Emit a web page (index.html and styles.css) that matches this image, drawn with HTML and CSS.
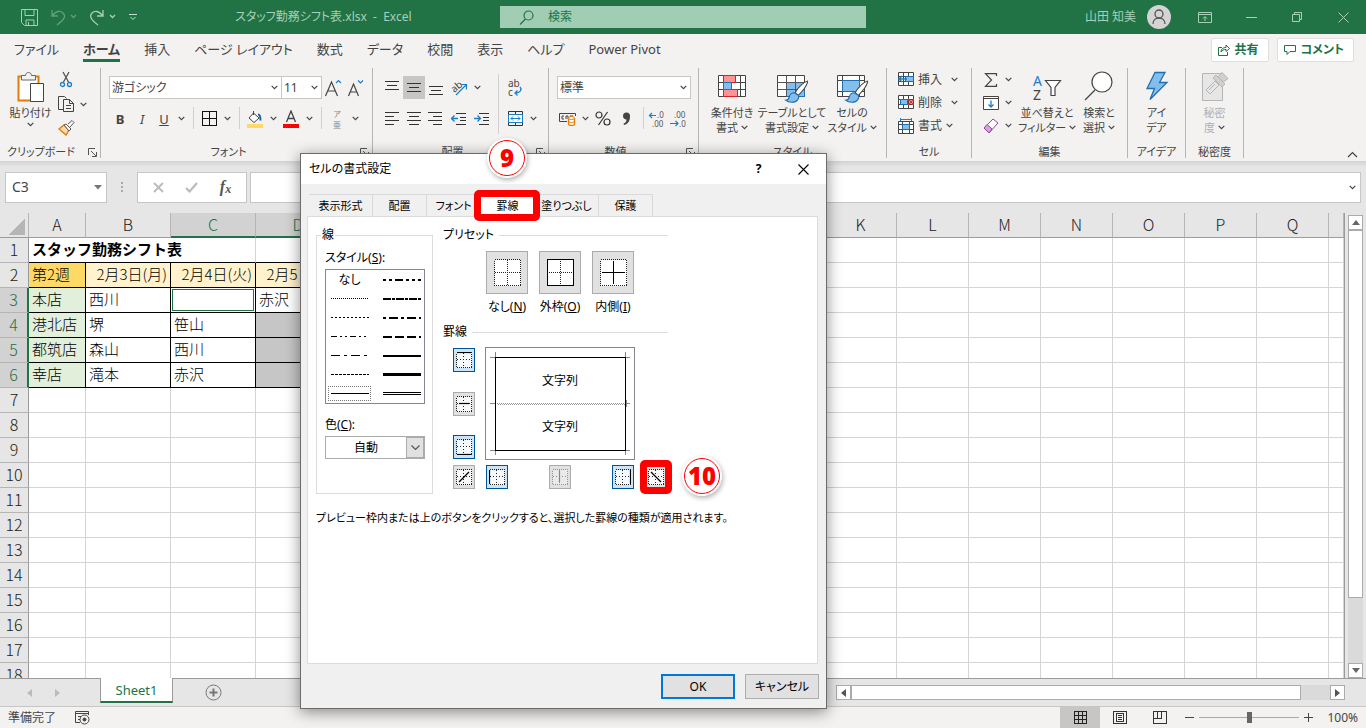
FILE: index.html
```html
<!DOCTYPE html>
<html lang="ja">
  <head>
    <meta charset="UTF-8" />
    <meta name="viewport" content="width=device-width, initial-scale=1.0" />
    <title>スタッフ勤務シフト表.xlsx - Excel</title>
    <link rel="stylesheet" href="styles.css">
  </head>
  <body>
    <!-- shared icons -->
    <svg class="defs" width="0" height="0">
      <symbol id="chev" viewBox="0 0 7 5"><path d="M.7.8l2.800 2.800L6.300.8" fill="none" stroke="#444" stroke-width="1.200" /></symbol>
      <symbol id="launcher" viewBox="0 0 9 9"><path d="M.5 7V.5H7M3 3l5 5M8.500 4v4.500H4" fill="none" stroke="#555" /></symbol>
      <symbol id="brush" viewBox="0 0 30 30">
        <path d="M29 7.500c-4 1-9 6-12 11l3 2.500c4-4 8-9 9-13.500z" fill="#fff" stroke="#444" />
        <path d="M16 18.500c-2 0-4 1.500-4.500 4-.5 2-1.500 3-3.500 3 3 2.500 9 3 11.500-.5 1-1.500 1-3 .5-4z" fill="#83beec" stroke="#1f6fb5" />
      </symbol>
    </svg>

    <header class="titlebar">
      <div class="titlebar-left">
        <button class="qat" aria-label="保存">
          <svg width="17" height="17" fill="none" stroke="#a6d0b7"><path d="M.5.5h16v16h-13l-3-3zM4 .5v6h9v-6M5 16v-5h8v5M7.500 16v-3" /></svg>
        </button>
        <button class="qat off" aria-label="元に戻す">
          <svg width="26" height="17" fill="none" stroke="#5f9f7c" stroke-width="1.300"><path d="M1 1v6h6M1 7c4-5 8-6 11-3s2 6-6 12M20 6l2.500 2.500L25 6" /></svg>
        </button>
        <button class="qat" aria-label="やり直し">
          <svg width="26" height="17" fill="none" stroke="#a6d0b7" stroke-width="1.300"><path d="M13 1v6H7M13 7C9 2 5 1 2 4s-1 7 6 12M20 6l2.500 2.500L25 6" /></svg>
        </button>
        <button class="qat" aria-label="カスタマイズ">
          <svg width="8" height="7" fill="none" stroke="#c4dfcf"><path d="M0 .5h8M1.500 3L4 5.500 6.500 3" /></svg>
        </button>
        <span class="doc-name">スタッフ勤務シフト表.xlsx&nbsp; -&nbsp; Excel</span>
      </div>
      <label class="search">
        <svg width="15" height="15" fill="none" stroke="#217346" stroke-width="1.200"><circle cx="9.500" cy="5.500" r="4.500" /><path d="M6.500 9L1 14.500" /></svg>
        <input type="text" placeholder="検索" />
      </label>
      <div class="titlebar-right">
        <span class="user">山田 知美</span>
        <svg class="avatar" width="24" height="24" fill="none" stroke="#555" stroke-width="1.300"><circle cx="12" cy="12" r="12" fill="#d4d4d4" stroke="none" /><circle cx="12" cy="9" r="4" /><path d="M6 19c0-8 12-8 12 0" /></svg>
        <button class="win" aria-label="リボンの表示"><svg width="14" height="11" fill="none" stroke="#a6d0b7"><path d="M.5.5h13v10H.5zM.5 2.500h13M7 9V5M5 6.500l2-2 2 2" /></svg></button>
        <button class="win" aria-label="最小化"><svg width="11" height="11" stroke="#a6d0b7"><path d="M0 5.500h11" /></svg></button>
        <button class="win" aria-label="元のサイズ"><svg width="11" height="11" fill="none" stroke="#a6d0b7"><path d="M.5 2.500h7v7h-7zM2.500 2V.5h7v7H8" /></svg></button>
        <button class="win" aria-label="閉じる"><svg width="11" height="11" stroke="#a6d0b7"><path d="M.5.5l10 10M10.500.5l-10 10" /></svg></button>
      </div>
    </header>

    <nav class="tabs">
      <a href="#">ファイル</a>
      <a href="#" class="current">ホーム</a>
      <a href="#">挿入</a>
      <a href="#">ページ レイアウト</a>
      <a href="#">数式</a>
      <a href="#">データ</a>
      <a href="#">校閲</a>
      <a href="#">表示</a>
      <a href="#">ヘルプ</a>
      <a href="#">Power Pivot</a>
      <div class="tab-actions">
        <button><svg width="12" height="12" fill="none" stroke="#217346"><path d="M4 3.500H.5v8h9V8M3 8c0-3 2-4.500 5-4.500V1l3.500 3.500L8 7.500V5.500C6 5.500 4 6 3 8z" /></svg>共有</button>
        <button><svg width="12" height="12" fill="none" stroke="#217346"><path d="M.5 1.500h11v6H6l-3 3v-3H.500z" /></svg>コメント</button>
      </div>
    </nav>

    <section class="ribbon">
      <div class="group clipboard">
        <div class="group-body">
          <button class="big">
            <svg width="30" height="32" fill="none"><path d="M2.500 5.500h20v24h-20z" fill="#fff" stroke="#e07c0a" stroke-width="2" /><path d="M5.500 9V4.500h4c0-4 6-4 6 0h4V9z" fill="#f3f2f1" stroke="#666" /><path d="M14.500 12.500h13v18h-13z" fill="#fff" stroke="#444" /></svg>
            <span>貼り付け</span>
            <svg class="chev"><use href="#chev" /></svg>
          </button>
          <div class="stack">
            <button aria-label="切り取り"><svg width="16" height="18" fill="none"><path d="M5 1l5.500 10M11 1L5.500 11" stroke="#555" stroke-width="1.300" /><circle cx="4.500" cy="13.500" r="2" stroke="#1b7fc7" stroke-width="1.300" /><circle cx="11.500" cy="13.500" r="2" stroke="#1b7fc7" stroke-width="1.300" /></svg></button>
            <button aria-label="コピー"><svg width="17" height="17" fill="#f3f2f1" stroke="#444"><path d="M6 13.500H.5V.5h6l2 2" /><path d="M5.500 3.500h6l4 4v8h-10zM11.500 3.500v4h4M8 9.500h5M8 12.500h5" /></svg><svg class="chev"><use href="#chev" /></svg></button>
            <button aria-label="書式のコピー"><svg width="17" height="16" fill="none"><path d="M1 9l5-4 5 5-3 5z" fill="#fdd9a8" stroke="#e07c0a" stroke-width="1.400" /><path d="M6 5l2-1 5 5-2 2zM10 4l4-3.500 2 2L12 7" fill="#fff" stroke="#555" /></svg></button>
          </div>
        </div>
        <div class="group-label">クリップボード<svg class="launch"><use href="#launcher" /></svg></div>
      </div>

      <div class="group font">
        <div class="group-body rows">
          <div class="row">
            <span class="combo font-name"><select aria-label="フォント"><option>游ゴシック</option></select><svg class="chev"><use href="#chev" /></svg></span>
            <span class="combo font-size"><select aria-label="フォント サイズ"><option>11</option></select><svg class="chev"><use href="#chev" /></svg></span>
            <button class="tool" aria-label="拡大"><svg width="18" height="20" fill="none"><path d="M1.500 18L7.500 4l6 14M4 13h7" stroke="#444" stroke-width="1.200" /><path d="M12 5l2.500-2.500L17 5" stroke="#1b7fc7" stroke-width="1.200" /></svg></button>
            <button class="tool" aria-label="縮小"><svg width="18" height="20" fill="none"><path d="M2.500 18L7.500 6l5 12M4.500 14h6" stroke="#444" stroke-width="1.200" /><path d="M12 2.500L14.500 5 17 2.500" stroke="#1b7fc7" stroke-width="1.200" /></svg></button>
          </div>
          <div class="row">
            <button class="tool"><b>B</b></button>
            <button class="tool"><i>I</i></button>
            <button class="tool"><u>U</u></button>
            <button class="drop" aria-label="下線"><svg class="chev"><use href="#chev" /></svg></button>
            <span class="sep"></span>
            <button class="tool wide" aria-label="罫線"><svg width="15" height="15" fill="none" stroke="#111" class="crisp"><path d="M.5.5h14v14H.5zM7.500 0v15M0 7.500h15" /></svg></button>
            <button class="drop" aria-label="罫線の種類"><svg class="chev"><use href="#chev" /></svg></button>
            <span class="sep"></span>
            <button class="tool wide" aria-label="塗りつぶし"><svg width="16" height="18" fill="none"><path d="M6.500 3l5.500 5-5 4.500L2 8zM6.500 5V1" fill="#fff" stroke="#444" /><path d="M11 4.500c2 0 2.500 2 2.500 6" stroke="#1b5fa5" stroke-width="2" /><path d="M0 14h16v4H0z" fill="#ffd966" /></svg></button>
            <button class="drop" aria-label="塗りつぶしの色"><svg class="chev"><use href="#chev" /></svg></button>
            <button class="tool wide" aria-label="フォントの色"><svg width="16" height="18" fill="none"><path d="M3.500 12L8 1l4.500 11M5 8.500h6" stroke="#444" stroke-width="1.300" /><path d="M0 14h16v4H0z" fill="#f00" /></svg></button>
            <button class="drop" aria-label="文字の色"><svg class="chev"><use href="#chev" /></svg></button>
            <span class="sep"></span>
            <button class="tool wide ruby"><span>ア</span><span>亜</span></button>
            <button class="drop" aria-label="ふりがな"><svg class="chev"><use href="#chev" /></svg></button>
          </div>
        </div>
        <div class="group-label">フォント<svg class="launch"><use href="#launcher" /></svg></div>
      </div>

      <div class="group align">
        <div class="group-body">
          <div class="rows">
            <div class="row">
              <button class="tool" aria-label="上揃え"><svg width="14" height="16" stroke="#333" class="crisp"><path d="M0 1.500h14M2 5.500h10M0 9.500h14" /></svg></button>
              <button class="tool on" aria-label="上下中央揃え"><svg width="14" height="16" stroke="#333" class="crisp"><path d="M0 3.500h14M2 7.500h10M0 11.500h14" /></svg></button>
              <button class="tool" aria-label="下揃え"><svg width="14" height="16" stroke="#333" class="crisp"><path d="M0 6.500h14M2 10.500h10M0 14.500h14" /></svg></button>
              <button class="tool wide" aria-label="方向"><svg width="20" height="19" fill="none"><text x="3" y="13" font-size="10" fill="#444" transform="rotate(-40 7 11)">ab</text><path d="M7 17L17 7M12.500 6.500h5v5" stroke="#1b7fc7" stroke-width="1.200" /></svg></button>
              <button class="drop" aria-label="方向の種類"><svg class="chev"><use href="#chev" /></svg></button>
            </div>
            <div class="row">
              <button class="tool" aria-label="左揃え"><svg width="14" height="14" stroke="#333" class="crisp"><path d="M0 .5h14M0 4.500h9M0 8.500h14M0 12.500h9" /></svg></button>
              <button class="tool" aria-label="中央揃え"><svg width="14" height="14" stroke="#333" class="crisp"><path d="M0 .5h14M2 4.500h10M0 8.500h14M2 12.500h10" /></svg></button>
              <button class="tool" aria-label="右揃え"><svg width="14" height="14" stroke="#333" class="crisp"><path d="M0 .5h14M5 4.500h9M0 8.500h14M5 12.500h9" /></svg></button>
              <button class="tool wide" aria-label="インデントを減らす"><svg width="15" height="13" fill="none" stroke="#333"><path d="M5 1.500h10M9 5.500h6M9 8.500h6M5 12.500h10" /><path d="M0 6.500h7M3.500 3.500l-3 3 3 3" stroke="#1b7fc7" stroke-width="1.300" /></svg></button>
              <button class="tool" aria-label="インデントを増やす"><svg width="15" height="13" fill="none" stroke="#333"><path d="M5 1.500h10M9 5.500h6M9 8.500h6M5 12.500h10" /><path d="M0 6.500h6M3.500 3.500l3 3-3 3" stroke="#1b7fc7" stroke-width="1.300" /></svg></button>
            </div>
          </div>
          <span class="sep tall"></span>
          <div class="rows">
            <div class="row">
              <button class="tool wide" aria-label="折り返して全体を表示する"><svg width="18" height="20"><text x="2" y="9" font-size="10" fill="#444">ab</text><text x="2" y="18" font-size="10" fill="#444">c</text><path d="M14 9c2 2 1 6-5 6M11.500 12.500L9 15l2.500 2.500" fill="none" stroke="#1b7fc7" stroke-width="1.300" /></svg></button>
            </div>
            <div class="row">
              <button class="tool wide" aria-label="セルを結合"><svg width="15" height="15" fill="none"><path d="M.5.5h14v14H.5zM7.500 0v4M7.500 11v4" stroke="#333" /><path d="M.5 3.500h14v8H.5z" fill="#fff" stroke="#1b7fc7" /><path d="M3 7.500h9M5 5.500l-2 2 2 2M10 5.500l2 2-2 2" stroke="#1b7fc7" /></svg></button>
              <button class="drop" aria-label="結合の種類"><svg class="chev"><use href="#chev" /></svg></button>
            </div>
          </div>
        </div>
        <div class="group-label">配置<svg class="launch"><use href="#launcher" /></svg></div>
      </div>

      <div class="group number">
        <div class="group-body rows">
          <div class="row">
            <span class="combo format"><select aria-label="表示形式"><option>標準</option></select><svg class="chev"><use href="#chev" /></svg></span>
          </div>
          <div class="row">
            <button class="tool" aria-label="通貨"><svg width="18" height="14" fill="none"><path d="M16.500 4V1.500H.5v8H8M5 4H3v3h2M7 7V4h2v3M11 4h3" stroke="#444" /><path d="M9.500 6v6c0 2 6 2 6 0V6" fill="#fff" stroke="#e07c0a" stroke-width="1.300" /><ellipse cx="12.500" cy="6" rx="3" ry="1.500" stroke="#e07c0a" fill="#fff" /><path d="M9.500 9c0 2 6 2 6 0" stroke="#e07c0a" /></svg></button>
            <button class="drop" aria-label="通貨の種類"><svg class="chev"><use href="#chev" /></svg></button>
            <button class="tool wide" aria-label="パーセント"><svg width="16" height="15" fill="none" stroke="#333" stroke-width="1.200"><circle cx="4" cy="4" r="3" /><circle cx="12" cy="11" r="3" /><path d="M12.500 1l-9 13" /></svg></button>
            <button class="tool" aria-label="桁区切り"><svg width="9" height="14"><path d="M1 4a3.500 3.500 0 0 1 7 0c0 5-2 8-6 9l-.5-1.500c2-.5 3-2 3-4C2.500 7.500 1 6 1 4z" fill="#444" /></svg></button>
            <span class="sep"></span>
            <button class="tool" aria-label="小数点以下を増やす"><svg width="20" height="18" fill="none"><text x="9" y="8" font-size="8" fill="#555">.0</text><text x="4" y="17" font-size="8" fill="#555">.00</text><path d="M1 5.500h7M4 3L1.500 5.500 4 8" stroke="#1b7fc7" stroke-width="1.200" /></svg></button>
            <button class="tool" aria-label="小数点以下を減らす"><svg width="20" height="18" fill="none"><text x="4" y="8" font-size="8" fill="#555">.00</text><text x="9" y="17" font-size="8" fill="#555">.0</text><path d="M0 13.500h8M5.500 11L8 13.500 5.500 16" stroke="#1b7fc7" stroke-width="1.200" /></svg></button>
          </div>
        </div>
        <div class="group-label">数値<svg class="launch"><use href="#launcher" /></svg></div>
      </div>

      <div class="group styles">
        <div class="group-body">
          <button class="big">
            <svg width="30" height="32" fill="none"><path d="M1.500 4.500h27v21h-27zM1 11.500h28M1 18.500h28M6.500 4v22M13.500 4v22M23.500 4v22" fill="#fff" stroke="#444" /><path d="M6.500 4.500h12v7h-12zM6.500 18.500h14v7h-14z" fill="#ff9393" stroke="#d92020" /><path d="M6.500 11.500h8v7h-8z" fill="#83beec" stroke="#1f6fb5" /></svg>
            <span>条件付き<br>書式 <svg class="chev"><use href="#chev" /></svg></span>
          </button>
          <button class="big">
            <svg width="32" height="32" fill="none"><path d="M1.500 4.500h27v21h-27z" fill="#fff" stroke="#444" /><path d="M10.500 11.500h18v14h-18z" fill="#83beec" stroke="#1f6fb5" /><path d="M1 11.500h28M1 18.500h28M10.500 4v22M19.500 4v22" stroke="#555" /><use href="#brush" width="32" height="32" x="1" y="2" /></svg>
            <span>テーブルとして<br>書式設定 <svg class="chev"><use href="#chev" /></svg></span>
          </button>
          <button class="big">
            <svg width="32" height="32" fill="none"><path d="M1.500 4.500h27v21h-27zM1 9.500h28M1 20.500h28M6.500 4v22M23.500 4v22" fill="#fff" stroke="#444" /><path d="M6.500 9.500h17v11h-17z" fill="#83beec" stroke="#1f6fb5" /><use href="#brush" width="32" height="32" x="1" y="2" /></svg>
            <span>セルの<br>スタイル <svg class="chev"><use href="#chev" /></svg></span>
          </button>
        </div>
        <div class="group-label">スタイル</div>
      </div>

      <div class="group cells">
        <div class="group-body list">
          <button><svg width="16" height="15" fill="none"><path d="M.5.5h15v13H.5zM5.500 0v14M10.500 0v14M0 4.500h16M0 9.500h16" fill="#fff" stroke="#444" /><path d="M7.500 4.500h8v5h-8z" fill="#83beec" stroke="#1f6fb5" /><path d="M1 7h8M4 4L1 7l3 3" stroke="#1b7fc7" stroke-width="1.500" /></svg>挿入<svg class="chev far"><use href="#chev" /></svg></button>
          <button><svg width="16" height="15" fill="none"><path d="M.5.5h15v13H.5zM5.500 0v14M10.500 0v14M0 4.500h16M0 9.500h16" fill="#fff" stroke="#444" /><path d="M2.500 4.500h7v5h-7z" fill="#83beec" stroke="#1f6fb5" /><path d="M10 4l6 6M16 4l-6 6" stroke="#e03030" stroke-width="1.500" /></svg>削除<svg class="chev far"><use href="#chev" /></svg></button>
          <button><svg width="16" height="16" fill="none"><path d="M.5 3.500h15v12H.5zM4.500 3v12M11.500 3v12M0 6.500h16M0 11.500h16" fill="#fff" stroke="#444" /><path d="M4.500 6.500h7v5h-7z" fill="#83beec" stroke="#1f6fb5" /><path d="M2 1.500h12M2.500 0v3M13.500 0v3" stroke="#1b7fc7" /></svg>書式<svg class="chev"><use href="#chev" /></svg></button>
        </div>
        <div class="group-label">セル</div>
      </div>

      <div class="group editing">
        <div class="group-body">
          <div class="list">
            <button aria-label="オート SUM"><svg width="16" height="14" fill="none" stroke="#444" stroke-width="1.200"><path d="M13.500 3V.6H2.500l6 6.400-6 6.400h11V11" /></svg><svg class="chev"><use href="#chev" /></svg></button>
            <button aria-label="フィル"><svg width="16" height="14" fill="none" stroke="#444"><path d="M.5.5h15v13H.5zM0 2.500h16" fill="#fff" /><path d="M8 4.500V11M5.500 8.500L8 11l2.500-2.500" stroke="#1b7fc7" stroke-width="1.300" /></svg><svg class="chev"><use href="#chev" /></svg></button>
            <button aria-label="クリア"><svg width="16" height="16" fill="none" stroke="#9b3fa8"><path d="M1 10l9-9 5 4-9 10z" fill="#fff" /><path d="M1 10l3-3.500 5 4.500-3 4z" fill="#d7a3de" /></svg><svg class="chev"><use href="#chev" /></svg></button>
          </div>
          <button class="big">
            <svg width="30" height="32" fill="none"><text x="1" y="15" font-size="14" fill="#1b7fc7">A</text><text x="1" y="29" font-size="14" fill="#444">Z</text><path d="M13.500 9.500h15l-5.500 7v8h-4v-8z" fill="#fff" stroke="#444" stroke-width="1.200" /></svg>
            <span>並べ替えと<br>フィルター <svg class="chev"><use href="#chev" /></svg></span>
          </button>
          <button class="big">
            <svg width="30" height="32" fill="none" stroke="#444" stroke-width="1.200"><circle cx="18" cy="11" r="10" fill="#fff" /><path d="M11 19L1 29" /></svg>
            <span>検索と<br>選択 <svg class="chev"><use href="#chev" /></svg></span>
          </button>
        </div>
        <div class="group-label">編集</div>
      </div>

      <div class="group single">
        <div class="group-body">
          <button class="big">
            <svg width="24" height="32" fill="none"><path d="M10 1.500h10l-5.500 10H22L5 28.500l4.500-11H2z" fill="#83beec" stroke="#1f6fb5" stroke-width="1.300" /></svg>
            <span>アイ<br>デア</span>
          </button>
        </div>
        <div class="group-label">アイデア</div>
      </div>

      <div class="group single">
        <div class="group-body">
          <button class="big" disabled>
            <svg width="28" height="32" fill="#e6e6e6" stroke="#b5b5b5"><path d="M1.500 2.500h20v27h-20z" /><path d="M5 19l9-9 4 4-9 9zM8 19l6-6" /><path d="M12 7l3-3 9 9-3 3zM17 6l4-4.500 6 6L22.500 11z" fill="#d0d0d0" /></svg>
            <span>秘密<br>度 <svg class="chev"><use href="#chev" /></svg></span>
          </button>
        </div>
        <div class="group-label">秘密度</div>
      </div>
      <button class="collapse" aria-label="リボンを折りたたむ"><svg width="11" height="7" fill="none" stroke="#444" stroke-width="1.200"><path d="M1 6l4.500-4.500L10 6" /></svg></button>
    </section>

    <section class="formula-bar">
      <label class="name-box"><input type="text" value="C3" aria-label="名前ボックス" /><svg width="8" height="5"><path d="M0 0h8L4 4.500z" fill="#777" /></svg></label>
      <svg class="grip" width="3" height="11"><path d="M0 0h2v2H0zM0 4h2v2H0zM0 8h2v2H0z" fill="#aaa" /></svg>
      <div class="fx">
        <button aria-label="キャンセル"><svg width="11" height="11" stroke="#bbb" stroke-width="1.800"><path d="M1 1l9 9M10 1l-9 9" /></svg></button>
        <button aria-label="入力"><svg width="13" height="11" fill="none" stroke="#bbb" stroke-width="2.200"><path d="M1 6l3.500 3.500L12 1" /></svg></button>
        <button class="fn"><i>f</i><i class="x">x</i></button>
      </div>
      <label class="formula"><input type="text" aria-label="数式バー" /><svg class="chev"><use href="#chev" /></svg></label>
    </section>

    <main class="workspace">
      <div class="sheet">
        <table>
          <colgroup id="cols"></colgroup>
          <thead><tr id="letters"></tr></thead>
          <tbody id="cells"></tbody>
        </table>
      </div>
      <div class="vscroll">
        <button aria-label="上へ"><svg width="8" height="5"><path d="M0 5h8L4 0z" fill="#666" /></svg></button>
        <div class="track"><div class="thumb"></div></div>
        <button aria-label="下へ"><svg width="8" height="5"><path d="M0 0h8L4 5z" fill="#666" /></svg></button>
      </div>
    </main>

    <div class="sheet-bar">
      <button class="nav" aria-label="前のシート"><svg width="5" height="8"><path d="M5 0v8L0 4z" fill="#bbb" /></svg></button>
      <button class="nav" aria-label="次のシート"><svg width="5" height="8"><path d="M0 0v8l5-4z" fill="#bbb" /></svg></button>
      <button class="sheet-tab">Sheet1</button>
      <button class="add" aria-label="新しいシート"><svg width="17" height="17" fill="none" stroke="#777"><circle cx="8.500" cy="8.500" r="7.500" /><path d="M8.500 4.500v8M4.500 8.500h8" stroke-width="2" /></svg></button>
      <div class="hscroll">
        <button aria-label="左へ"><svg width="5" height="8"><path d="M5 0v8L0 4z" fill="#555" /></svg></button>
        <div class="track"><div class="thumb"></div></div>
        <button aria-label="右へ"><svg width="5" height="8"><path d="M0 0v8l5-4z" fill="#555" /></svg></button>
      </div>
    </div>

    <footer class="status">
      <span>準備完了</span>
      <svg width="15" height="14" fill="none" stroke="#444"><path d="M5 11.500H.5V.5h13V4M0 2.500h14M3 5.500h3M3 8.500h2" /><circle cx="9.500" cy="8.500" r="4.500" /><circle cx="9.500" cy="8.500" r="1.500" fill="#444" /></svg>
      <div class="views">
        <button class="on" aria-label="標準"><svg width="13" height="13" fill="none" stroke="#222" class="crisp"><path d="M.5.5h12v12H.500zM4.500 0v13M8.500 0v13M0 4.500h13M0 8.500h13" /></svg></button>
        <button aria-label="ページ レイアウト"><svg width="14" height="13" fill="none" stroke="#333" class="crisp"><path d="M.5.5h13v12H.500zM3.500 2.500h7v8h-7zM5 4.500h4M5 6.500h4M5 8.500h4" /></svg></button>
        <button aria-label="改ページ プレビュー"><svg width="14" height="13" fill="none" stroke="#333" class="crisp"><path d="M.5.5h13v12H.500zM.5 7.500h8v-7M4.500 0v8" /></svg></button>
      </div>
      <div class="zoom">
        <button aria-label="縮小"><svg width="9" height="9" stroke="#444" class="crisp"><path d="M0 4.500h9" /></svg></button>
        <input type="range" min="0" max="100" value="50" aria-label="ズーム" />
        <button aria-label="拡大"><svg width="9" height="9" stroke="#444" class="crisp"><path d="M0 4.500h9M4.500 0v9" /></svg></button>
        <span>100%</span>
      </div>
    </footer>

    <div class="dialog" role="dialog" aria-labelledby="dialog-title">
      <div class="dialog-head">
        <span id="dialog-title">セルの書式設定</span>
        <button aria-label="ヘルプ"><b>?</b></button>
        <button aria-label="閉じる"><svg width="11" height="11" stroke="#000" stroke-width="1.100"><path d="M.5.5l10 10M10.500.5l-10 10" /></svg></button>
      </div>
      <div class="dialog-tabs" role="tablist">
        <button>表示形式</button>
        <button class="narrow">配置</button>
        <button class="narrow">フォント</button>
        <button class="narrow active marked">罫線</button>
        <button>塗りつぶし</button>
        <button class="narrow">保護</button>
      </div>
      <div class="panel">
        <div class="panel-cols">
          <fieldset class="line-box">
            <legend>線</legend>
            <div class="label">スタイル(<u>S</u>):</div>
            <div class="line-list" id="lines"></div>
            <label class="label" for="line-color">色(<u>C</u>):</label>
            <span class="combo color"><select id="line-color"><option>自動</option></select><span class="arrow"><svg width="9" height="6" fill="none" stroke="#555" stroke-width="1.200"><path d="M.5.5l4 4 4-4" /></svg></span></span>
          </fieldset>

          <div class="settings">
            <h3>プリセット</h3>
            <div class="presets">
              <label><button><svg width="27" height="27" class="crisp"><path d="M.5.5h26v26H.500z" fill="#fff" stroke="#222" stroke-dasharray="1 1" /><path d="M13.500 1v25M1 13.500h25" stroke="#222" stroke-dasharray="1 1" /></svg></button>なし(<u>N</u>)</label>
              <label><button><svg width="27" height="27" class="crisp"><path d="M.5.5h26v26H.500z" fill="#fff" stroke="#000" /><path d="M13.500 2v24M2 13.500h24" stroke="#222" stroke-dasharray="1 1" /></svg></button>外枠(<u>O</u>)</label>
              <label><button><svg width="27" height="27" class="crisp"><path d="M.5.5h26v26H.500z" fill="#fff" stroke="#222" stroke-dasharray="1 1" /><path d="M13.500 2v23M2 13.500h23" stroke="#000" /></svg></button>内側(<u>I</u>)</label>
            </div>
            <h3>罫線</h3>
            <div class="borders">
              <div class="side">
                <button class="edge on" data-line="M1 .5h14" aria-label="上罫線"></button>
                <button class="edge" data-line="M3 7.500h10" aria-label="中央横罫線"></button>
                <button class="edge on" data-line="M1 15.500h14" aria-label="下罫線"></button>
              </div>
              <div class="preview">
                <svg width="148" height="111" fill="none" class="crisp">
                  <path d="M4 9.500h10M9.500 4v10M134 9.500h10M139.500 4v10M4 102.500h10M9.500 97v10M134 102.500h10M139.500 97v10M4 55.500h6M139 55.500h5M9.500 52v7M140.500 52v7" stroke="#888" />
                  <path d="M9.500 9.500h130v93H9.500z" stroke="#000" />
                  <path d="M11 55.500h128" stroke="#999" stroke-dasharray="1 1" />
                  <path d="M12 56.500h127" stroke="#999" stroke-dasharray="1 1" />
                  <text x="74" y="37" text-anchor="middle">文字列</text>
                  <text x="74" y="83" text-anchor="middle">文字列</text>
                </svg>
              </div>
              <span></span>
              <button class="edge" data-line="M3 13L13 3" aria-label="右上がり斜線"></button>
              <div class="below">
                <button class="edge on" data-line="M.5 1v14" aria-label="左罫線"></button>
                <button class="edge" disabled data-line="M7.500 2v11" aria-label="中央縦罫線"></button>
                <button class="edge on" data-line="M15.500 1v14" aria-label="右罫線"></button>
              </div>
              <button class="edge marked" data-line="M3 3L13 13" aria-label="右下がり斜線"></button>
            </div>
          </div>
        </div>
        <p>プレビュー枠内または上のボタンをクリックすると、選択した罫線の種類が適用されます。</p>
      </div>
      <div class="dialog-foot">
        <button class="primary">OK</button>
        <button>キャンセル</button>
      </div>
      <span class="callout nine"><b>9</b></span>
      <span class="callout ten"><b>10</b></span>
    </div>

    <script>
      // column letter -> width, the last one takes what is left
      const widths = { A: 57 };
      [..."BCDEFGH"].forEach((c) => (widths[c] = 85));
      [..."IJKLMNOPQ"].forEach((c) => (widths[c] = 72));
      const letters = Object.keys(widths);

      const data = {
        2: ["第2週", "2月3日(月)", "2月4日(火)", "2月5日(水)"],
        3: ["本店", "西川", "", "赤沢"],
        4: ["港北店", "堺", "笹山", ""],
        5: ["都筑店", "森山", "西川", ""],
        6: ["幸店", "滝本", "赤沢", ""],
      };

      document.getElementById("cols").innerHTML =
        '<col style="width: 29px">' +
        letters.map((c) => `<col style="width: ${widths[c]}px">`).join("") +
        "<col>";

      document.getElementById("letters").innerHTML =
        '<th class="corner"></th>' +
        letters
          .map((c) => `<th class="${"CD".includes(c) ? "sel" : ""}">${c}</th>`)
          .join("") +
        "<th></th>";

      let rows = "";
      for (let r = 1; r <= 18; r++) {
        const sel = r >= 3 && r <= 6;
        rows += `<tr><th class="${sel ? "sel" : ""}">${r}</th>`;
        if (r === 1) {
          rows += '<td class="title" colspan="3">スタッフ勤務シフト表</td>';
          rows += '<td class="under"></td>' + "<td></td>".repeat(14);
        } else {
          letters.forEach((c, i) => {
            const text = data[r] ? data[r][i] : undefined;
            let cls = "";
            if (text !== undefined) {
              cls = "box";
              if (r === 2) cls += i === 0 ? " week" : " date";
              else if (i === 0) cls += " shop";
              if (r === 3 && c === "C") cls += " cursor";
              if (r > 3 && c === "D") cls += " picked";
            }
            rows += `<td class="${cls}">${text || ""}</td>`;
          });
          rows += "<td></td>";
        }
        rows += "</tr>";
      }
      document.getElementById("cells").innerHTML = rows;

      // line styles, left and right column: [width, dashes]
      const lines = [
        null, [2, "3 3 3 3 8 3"],
        [1, "1 1"], [2, "8 1 3 1"],
        [1, "2 2"], [2, "3 3 9 3"],
        [1, "6 3 2 3 2 3"], [2, "9 3"],
        [1, "9 4 3 4"], [2, ""],
        [1, "3 1"], [3, ""],
        [1, ""], "double",
      ];
      document.getElementById("lines").innerHTML = lines
        .map((l, i) => {
          if (!l) return "<button>なし</button>";
          const body =
            l === "double"
              ? '<path d="M0 1.5h38M0 3.5h38" stroke="#000" />'
              : `<path d="M0 ${l[0] % 2 ? 2.5 : 3}h38" stroke="#000" stroke-width="${l[0]}" stroke-dasharray="${l[1]}" />`;
          return `<button class="${i === 12 ? "chosen" : ""}" aria-label="線 ${i}"><svg width="38" height="5" class="crisp">${body}</svg></button>`;
        })
        .join("");

      document.querySelectorAll(".edge").forEach((b) => {
        b.innerHTML = `<svg width="16" height="16">
          <path class="crisp" d="M.5.5h15v15H.5z" fill="#fff" fill-opacity=".8" stroke="#222" stroke-dasharray="1 1" />
          <path class="crisp" d="M7.5 1v15M1 7.5h15" fill="none" stroke="#222" stroke-dasharray="1 2" />
          <path d="${b.dataset.line}" stroke="#000" stroke-width="1.2" /></svg>`;
      });
    </script>
  </body>
</html>
```
FILE: styles.css
```css
* {
  box-sizing: border-box;
  margin: 0;
  padding: 0;
}

body {
  display: flex;
  flex-direction: column;
  height: 100vh;
  min-height: 600px;
  overflow: hidden;
  position: relative;
  font-family: "Noto Sans", "Noto Sans CJK JP", sans-serif;
  font-feature-settings: "palt";
  font-size: 12px;
  line-height: 16px;
  color: #444;
  background: #f3f2f1;
}

button,
input,
select {
  font: inherit;
  font-feature-settings: inherit;
  color: inherit;
  background: none;
  border: none;
  border-radius: 0;
  outline: none;
}

button {
  display: flex;
  align-items: center;
  justify-content: center;
  white-space: nowrap;
}

svg {
  display: block;
  flex: none;
}

.defs {
  position: absolute;
}

.crisp {
  shape-rendering: crispEdges;
}

.chev {
  display: inline-block;
  width: 7px;
  height: 5px;
  vertical-align: 2px;
}

/* title bar */
.titlebar {
  flex: none;
  display: grid;
  grid-template-columns: 500px minmax(200px, 366px) 1fr;
  align-items: center;
  height: 34px;
  background: #217346;
  color: #a6d0b7;
}

.titlebar-left {
  display: flex;
  align-items: center;
  gap: 13px;
  padding-left: 21px;
}

.doc-name {
  margin-left: 85px;
  white-space: nowrap;
}

.search {
  display: flex;
  align-items: center;
  gap: 14px;
  height: 22px;
  padding-left: 19px;
  background: #a0cdb4;
}

.search input {
  flex: 1;
}

.search input::placeholder {
  color: #217346;
}

.titlebar-right {
  display: flex;
  align-items: center;
  justify-content: flex-end;
}

.avatar {
  margin: 0 11px;
}

.win {
  width: 46px;
  height: 34px;
}

/* ribbon tabs */
.tabs {
  flex: none;
  display: flex;
  align-items: center;
  gap: 24px;
  height: 34px;
  padding: 0 12px 3px 14px;
  font-size: 13px;
}

.tabs a {
  padding: 3px 0 2px;
  color: #444;
  text-decoration: none;
  white-space: nowrap;
  border-bottom: 3px solid transparent;
}

.tabs a.current {
  font-weight: bold;
  border-color: #217346;
}

.tab-actions {
  display: flex;
  gap: 8px;
  margin-left: auto;
}

.tab-actions button {
  gap: 5px;
  height: 24px;
  padding: 0 9px 0 6px;
  font-weight: bold;
  font-size: 12px;
  color: #217346;
  background: #fff;
  border: 1px solid #e1dfdd;
  border-radius: 2px;
}

/* ribbon */
.ribbon {
  flex: none;
  display: flex;
  height: 93px;
}

.group {
  display: flex;
  flex-direction: column;
  height: 90px;
  border-right: 1px solid #b5b5b5;
}

.group-body {
  flex: 1;
  display: flex;
}

.group-label {
  position: relative;
  height: 14px;
  font-size: 11px;
  line-height: 16px;
  text-align: center;
}

.launch {
  position: absolute;
  right: 3px;
  top: 4px;
  width: 9px;
  height: 9px;
}

.rows {
  display: flex;
  flex-direction: column;
  gap: 8px;
  padding-top: 8px;
}

.row {
  display: flex;
  height: 23px;
}

.tool {
  width: 22px;
  height: 23px;
  font-size: 13px;
}

.tool.wide {
  width: 24px;
}

.tool.on {
  background: #c8c6c4;
}

.drop {
  width: 12px;
}

.sep {
  width: 1px;
  height: 22px;
  margin: 0 3px 0 6px;
  background: #d2d0ce;
}

.sep.tall {
  height: 60px;
  margin: 6px 4px 0 6px;
}

.combo {
  display: grid;
  align-items: center;
  height: 23px;
  background: #fff;
  border: 1px solid #c8c6c4;
}

.combo select {
  grid-area: 1 / 1;
  width: 100%;
  padding-left: 2px;
  appearance: none;
}

.combo > svg {
  grid-area: 1 / 1;
  justify-self: end;
  margin-right: 3px;
  pointer-events: none;
}

.big {
  flex-direction: column;
  justify-content: flex-start;
  width: 60px;
  padding-top: 3px;
  font-size: 11px;
  line-height: 15px;
}

.big > span {
  padding-top: 2px;
}

.big:disabled {
  color: #b0b0b0;
}

.list button {
  gap: 4px;
  height: 23px;
}

.clipboard {
  width: 101px;
}

.clipboard .group-body {
  padding-left: 3px;
}

.clipboard .big > span {
  padding-bottom: 2px;
}

.clipboard .big {
  width: 55px;
}

.clipboard .group-label {
  padding-right: 18px;
}

.stack button {
  gap: 5px;
  height: 24px;
}

.font {
  width: 272px;
  padding-left: 8px;
}

.font .group-label,
.align .group-label,
.number .group-label {
  padding-right: 24px;
}

.font-name {
  width: 173px;
}

.font-size {
  width: 40px;
  border-left: none;
}

.ruby {
  flex-direction: column;
  font-size: 8px;
  line-height: 11px;
  color: #888;
}

.align {
  width: 176px;
  padding-left: 8px;
}

.align .rows:first-child {
  width: 111px;
}

.number {
  width: 150px;
  padding-left: 8px;
}

.format {
  width: 134px;
}

.styles {
  width: 188px;
  padding: 0 3px;
}

.cells {
  width: 85px;
}

.cells .list {
  flex-direction: column;
  padding-left: 11px;
}

.cells .list button {
  justify-content: flex-start;
}

.list .far {
  margin-left: 5px;
}

.editing {
  width: 156px;
}

.editing .list {
  padding-left: 11px;
}

.editing .list button {
  gap: 6px;
}

.editing .big {
  width: 52px;
}

.editing .big:first-of-type {
  margin-left: 9px;
}

.single {
  width: 58px;
}

.collapse {
  align-self: flex-end;
  margin: 0 8px 3px auto;
}

/* formula bar */
.formula-bar {
  flex: none;
  display: flex;
  align-items: center;
  height: 52px;
  padding: 0 5px 0 5px;
  background: linear-gradient(#d2d2d2, #e6e6e6 6px);
}

.name-box,
.fx,
.formula {
  display: flex;
  align-items: center;
  height: 31px;
  background: #fff;
  border: 1px solid #c6c6c6;
}

.name-box {
  width: 102px;
  padding: 0 6px;
  font-size: 14px;
}

.name-box input {
  width: 82px;
}

.grip {
  margin: 0 13px 0 14px;
}

.fx {
  width: 110px;
  justify-content: space-around;
  padding: 0 4px;
}

.fn {
  font-family: "Liberation Serif", serif;
  font-size: 16px;
  font-weight: bold;
  color: #555;
}

.fn .x {
  padding-top: 3px;
  font-size: 12px;
}

.formula {
  flex: 1;
  margin-left: 3px;
  padding-right: 4px;
}

.formula input {
  flex: 1;
}

/* sheet */
.workspace {
  flex: 1;
  display: flex;
  min-height: 0;
  background: #e6e6e6;
}

.sheet {
  flex: 1;
  overflow: hidden;
  background: #fff;
  border-right: 1px solid #9b9b9b;
}

table {
  width: 100%;
  table-layout: fixed;
  border-collapse: separate;
  border-spacing: 0;
  font-family: "Noto Sans CJK JP", sans-serif;
  font-feature-settings: normal;
  font-weight: 300;
  font-size: 15px;
  line-height: 22px;
  color: #000;
}

th,
td {
  height: 25px;
  padding: 0 3px 2px;
  overflow: hidden;
  white-space: nowrap;
  border-right: 1px solid #d4d4d4;
  border-bottom: 1px solid #d4d4d4;
}

th {
  padding: 0 0 2px;
  font-weight: 300;
  font-size: 16px;
  color: #222;
  background: #e6e6e6;
  border-color: #b5b5b5;
}

thead th {
  border-bottom-color: #9b9b9b;
}

tbody th {
  border-right-color: #9b9b9b;
}

th.sel {
  color: #217346;
  background: #d2d2d2;
}

thead th.sel {
  padding-bottom: 1px;
  border-bottom: 2px solid #217346;
}

tbody th.sel {
  border-right: 2px solid #217346;
}

.corner {
  background: linear-gradient(135deg, #e6e6e6 50%, #b5b5b5 50%) 8px 5px / 17px 17px no-repeat #e6e6e6;
}

.title {
  font-weight: bold;
}

.title,
.under {
  border-bottom-color: #000;
}

.box {
  border-color: #000;
}

.week {
  background: #ffd966;
}

.date {
  text-align: right;
  background: #fff2cc;
}

.shop {
  background: #e2efda;
}

.cursor {
  box-shadow: inset 0 0 0 1px #fff, inset 0 0 0 2px #217346;
}

.picked {
  background: #c6c6c6;
}

/* scroll bars */
.vscroll {
  display: flex;
  flex-direction: column;
  width: 15px;
  margin: 2px 3px 0;
}

.vscroll button,
.hscroll button {
  flex: none;
  width: 15px;
  height: 15px;
  background: #fff;
  border: 1px solid #ababab;
}

.track {
  flex: 1;
  background: #dadada;
}

.thumb {
  background: #fff;
  border: 1px solid #ababab;
}

.vscroll .thumb {
  height: 85%;
}

.hscroll .thumb {
  width: 94%;
  height: 100%;
}

.sheet-bar {
  flex: none;
  display: flex;
  height: 28px;
  padding-right: 21px;
  background: #e6e6e6;
  border-top: 1px solid #9b9b9b;
}

.nav {
  width: 28px;
}

.nav:first-child {
  margin-left: 15px;
}

.sheet-tab {
  width: 73px;
  height: 25px;
  margin: -1px 32px 0 29px;
  font-size: 13px;
  color: #217346;
  background: #fff;
  border: 1px solid #9b9b9b;
  border-top: none;
  border-bottom: 2px solid #217346;
}

.hscroll {
  display: flex;
  width: 509px;
  height: 15px;
  margin: 6px 0 0 auto;
}

/* status bar */
.status {
  flex: none;
  display: flex;
  align-items: center;
  gap: 19px;
  height: 22px;
  padding: 0 8px;
  border-top: 1px solid #c6c6c6;
}

.views {
  display: flex;
  align-self: stretch;
  margin-left: auto;
}

.views button {
  width: 40px;
}

.views .on {
  background: #c8c6c4;
}

.zoom {
  display: flex;
  align-items: center;
  gap: 5px;
  margin-left: -14px;
}

.zoom span {
  padding-left: 9px;
}

.zoom input {
  width: 100px;
  height: 12px;
  appearance: none;
  background: linear-gradient(#aaa, #aaa) center / 100% 1px no-repeat;
}

.zoom input::-webkit-slider-thumb {
  appearance: none;
  width: 5px;
  height: 11px;
  background: #666;
}

/* dialog */
.dialog {
  position: absolute;
  left: 300px;
  top: 153px;
  display: flex;
  flex-direction: column;
  width: 527px;
  height: 556px;
  padding-bottom: 9px;
  color: #000;
  background: #f0f0f0;
  border: 1px solid #6b6b6b;
  box-shadow: 0 3px 14px rgba(0, 0, 0, 0.45);
}

.dialog-head {
  display: flex;
  align-items: center;
  height: 30px;
  padding-left: 8px;
  background: #fff;
}

.dialog-head span {
  margin-right: auto;
}

.dialog-head button {
  width: 45px;
  height: 30px;
}

.dialog-tabs {
  display: flex;
  margin: 10px 8px 0;
  font-size: 11px;
}

.dialog-tabs button {
  width: 64px;
  height: 22px;
  border: 1px solid #d9d9d9;
  border-width: 1px 1px 0 0;
}

.dialog-tabs .narrow {
  width: 54px;
}

.dialog-tabs .active {
  background: #fff;
}

.marked {
  position: relative;
}

/* red frame around the control to click */
.marked::after {
  content: "";
  position: absolute;
  inset: -5px -6px -5px -7px;
  border: 7px solid #f00;
  border-radius: 5px;
  z-index: 1;
}

.panel {
  flex: 1;
  margin: 0 8px 10px 6px;
  padding: 10px 8px;
  background: #fff;
  border: 1px solid #dcdcdc;
}

.panel-cols {
  display: flex;
  gap: 10px;
}

.line-box {
  width: 117px;
  height: 267px;
  padding: 6px 7px 0 8px;
  border: 1px solid #dcdcdc;
}

.line-box legend {
  margin-left: -4px;
  padding: 0 1px;
}

.label {
  display: block;
  height: 20px;
  line-height: 18px;
}

.line-list {
  display: grid;
  grid-template-columns: 1fr 1fr;
  grid-auto-rows: 19px;
  width: 100px;
  margin-bottom: 12px;
  border: 1px solid #828790;
}

.line-list button {
  margin: 2px 4px 2px 2px;
}

.line-list button:nth-child(even) {
  margin: 2px 2px 2px 6px;
}

.line-list .chosen {
  border: 1px dotted #777;
}

.color {
  grid-template-columns: 1fr 18px;
  width: 100px;
  border-color: #ababab;
}

.color select {
  padding: 0;
  text-align: center;
  text-align-last: center;
}

.color .arrow {
  display: flex;
  align-items: center;
  justify-content: center;
  height: 21px;
  background: #e1e1e1;
  border: 1px solid #ababab;
}

.settings {
  width: 225px;
}

h3 {
  display: flex;
  align-items: center;
  gap: 5px;
  font-size: 12px;
  font-weight: normal;
}

h3::after {
  content: "";
  flex: 1;
  height: 1px;
  background: #dcdcdc;
}

.presets {
  display: flex;
  gap: 11px;
  padding: 8px 0 9px 43px;
}

.presets label {
  display: flex;
  flex-wrap: wrap;
  justify-content: center;
  width: 42px;
  white-space: nowrap;
}

.presets button {
  width: 42px;
  height: 43px;
  margin-bottom: 5px;
  background: #e1e1e1;
  border: 1px solid #ababab;
}

.borders {
  display: grid;
  grid-template-columns: 22px 150px 22px;
  gap: 5px 10px;
  padding: 7px 0 0 10px;
}

.side {
  display: flex;
  flex-direction: column;
  justify-content: space-between;
  padding: 1px 0;
}

.below {
  display: flex;
  justify-content: space-between;
  padding: 0 1px;
}

.edge {
  width: 22px;
  height: 24px;
  background: #e1e1e1;
  border: 1px solid #ababab;
}

.edge.on {
  background: #cce4f7;
  border-color: #005499;
}

.edge:disabled svg {
  opacity: 0.4;
}

.edge.marked::after {
  inset: -6px;
}

.preview {
  height: 113px;
  border: 1px solid #828790;
}

.preview text {
  font-size: 12px;
  fill: #000;
}

.panel p {
  margin-top: 16px;
  font-size: 11px;
  white-space: nowrap;
}

.dialog-foot {
  display: flex;
  justify-content: flex-end;
  gap: 10px;
  padding-right: 7px;
}

.dialog-foot button {
  width: 74px;
  height: 25px;
  background: #e1e1e1;
  border: 1px solid #adadad;
}

.dialog-foot .primary {
  border: 2px solid #0078d7;
}

/* numbered step badges */
.callout {
  position: absolute;
  display: flex;
  padding: 2px;
  width: 40px;
  height: 40px;
  background: #fff;
  border-radius: 50%;
  box-shadow: 1px 2px 5px rgba(0, 0, 0, 0.3);
}

.callout b {
  flex: 1;
  font-family: "Open Sans", sans-serif;
  font-size: 24px;
  font-weight: 800;
  line-height: 33px;
  text-align: center;
  color: #f00;
  border: 1px solid #f00;
  border-radius: 50%;
}

.nine {
  left: 186px;
  top: -16px;
}

.ten {
  left: 381px;
  top: 302px;
}
```
